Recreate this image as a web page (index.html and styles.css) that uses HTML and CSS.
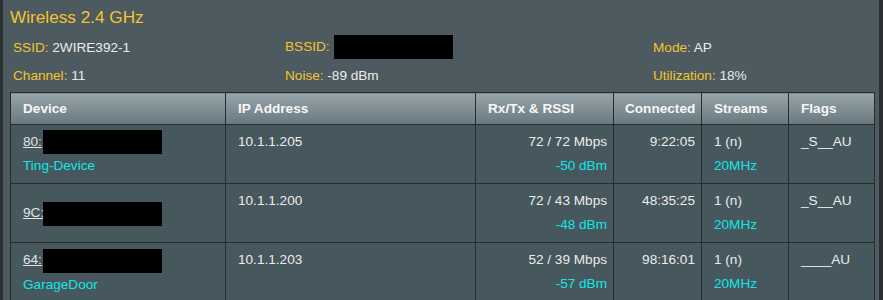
FILE: index.html
```html
<!DOCTYPE html>
<html>
<head>
<meta charset="utf-8">
<link rel="stylesheet" href="styles.css">
</head>
<body>
<div class="frame">
  <div class="panel">
    <div class="title">Wireless 2.4 GHz</div>
    <div class="info">
      <div class="item"><span class="lbl">SSID:</span> 2WIRE392-1</div>
      <div class="item"><span class="lbl">BSSID:</span> <span class="mask mask-bssid"></span></div>
      <div class="item"><span class="lbl">Mode:</span> AP</div>
      <div class="item"><span class="lbl">Channel:</span> 11</div>
      <div class="item"><span class="lbl">Noise:</span> -89 dBm</div>
      <div class="item"><span class="lbl">Utilization:</span> 18%</div>
    </div>
    <table class="clients">
      <colgroup>
        <col class="c-dev"><col class="c-ip"><col class="c-rate"><col class="c-conn"><col class="c-str"><col class="c-flag">
      </colgroup>
      <thead>
        <tr>
          <th>Device</th>
          <th>IP Address</th>
          <th>Rx/Tx &amp; RSSI</th>
          <th class="th-tight">Connected</th>
          <th>Streams</th>
          <th>Flags</th>
        </tr>
      </thead>
      <tbody>
        <tr>
          <td class="dev"><span class="mac">80:</span><span class="mask"></span><br><span class="cyan">Ting-Device</span></td>
          <td>10.1.1.205</td>
          <td class="right">72 / 72 Mbps<br><span class="cyan">-50 dBm</span></td>
          <td class="right">9:22:05</td>
          <td>1 (n)<br><span class="cyan">20MHz</span></td>
          <td>_S__AU</td>
        </tr>
        <tr>
          <td class="dev"><span class="mac">9C:</span><span class="mask"></span></td>
          <td>10.1.1.200</td>
          <td class="right">72 / 43 Mbps<br><span class="cyan">-48 dBm</span></td>
          <td class="right">48:35:25</td>
          <td>1 (n)<br><span class="cyan">20MHz</span></td>
          <td>_S__AU</td>
        </tr>
        <tr>
          <td class="dev"><span class="mac">64:</span><span class="mask"></span><br><span class="cyan">GarageDoor</span></td>
          <td>10.1.1.203</td>
          <td class="right">52 / 39 Mbps<br><span class="cyan">-57 dBm</span></td>
          <td class="right">98:16:01</td>
          <td>1 (n)<br><span class="cyan">20MHz</span></td>
          <td>____AU</td>
        </tr>
      </tbody>
    </table>
  </div>
</div>
</body>
</html>
```
FILE: styles.css
```css
html, body {
  margin: 0;
  padding: 0;
  background: #1f2426;
}
body {
  font-family: "Liberation Sans", Arial, Helvetica, sans-serif;
  font-size: 13.6px;
  color: #ececec;
  width: 883px;
  height: 300px;
  overflow: hidden;
}
.frame {
  padding-left: 3px;
  padding-right: 4px;
  height: 300px;
  background: #2a2f31;
}
.panel {
  background: #4d5a5f;
  height: 300px;
  padding: 5px 6px 0 7px;
  box-sizing: border-box;
}
.title {
  color: #f4c430;
  font-size: 17.2px;
  line-height: 24px;
}
.info {
  display: grid;
  grid-template-columns: 272px 368px auto;
  grid-auto-rows: 28px;
  align-items: center;
  margin-top: 4px;
  padding-left: 3px;
}
.lbl {
  color: #f4c430;
}
.mask {
  display: inline-block;
  background: #000;
  width: 119px;
  height: 24px;
  vertical-align: middle;
}
.mask-bssid {
  margin-left: 1px;
}
.clients {
  margin-top: 3px;
  border-collapse: collapse;
  table-layout: fixed;
  width: 864px;
  border: 1px solid #262c2e;
}
.c-dev { width: 215px; }
.c-ip { width: 250px; }
.c-rate { width: 138px; }
.c-conn { width: 88px; }
.c-str { width: 87px; }
.c-flag { width: 86px; }
.clients th {
  background: linear-gradient(#97a5aa, #68787e);
  color: #f7f7f7;
  font-weight: bold;
  text-align: left;
  height: 31px;
  padding: 0 12px;
  border: 1px solid #262c2e;
  white-space: nowrap;
}
.clients th.th-tight {
  padding-left: 11px;
  padding-right: 0;
}
.clients td {
  background: #46575d;
  border: 1px solid #262c2e;
  vertical-align: top;
  line-height: 24px;
  padding: 5px 6px 5px 12px;
  height: 48px;
  white-space: nowrap;
}
.clients td.dev {
  vertical-align: middle;
}
.clients td.right {
  text-align: right;
  padding-left: 6px;
}
.mac {
  display: inline-block;
  width: 20px;
  overflow: hidden;
  vertical-align: top;
  text-decoration: underline;
  color: #e2e2e2;
}
.cyan {
  color: #12e6e6;
}
```
